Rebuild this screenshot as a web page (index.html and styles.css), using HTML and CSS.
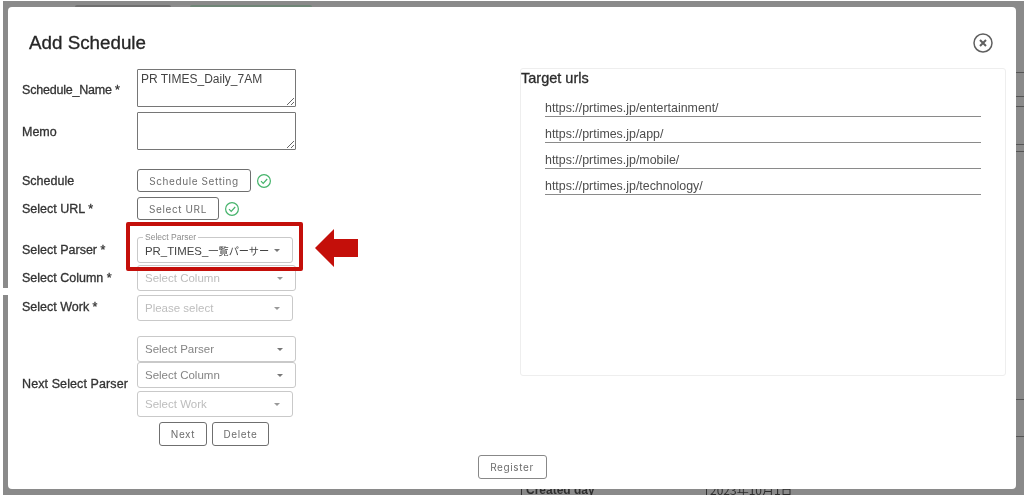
FILE: index.html
```html
<!DOCTYPE html>
<html lang="en">
<head>
<meta charset="utf-8">
<title>Add Schedule</title>
<link rel="stylesheet" href="styles.css">
</head>
<body>
<div class="page">
  <div class="backdrop">
    <div class="bg-bit bg-btn-a"></div>
    <div class="bg-bit bg-btn-b"></div>
    <div class="bg-bit bg-line l1"></div>
    <div class="bg-bit bg-line l2"></div>
    <div class="bg-bit bg-line l3"></div>
    <div class="bg-bit bg-line l4"></div>
    <div class="bg-bit bg-line l5"></div>
    <div class="bg-bit bg-line l6"></div>
    <div class="bg-bit bg-line l7"></div>
    <div class="bg-bit bg-bar b1"></div>
    <div class="bg-bit bg-bar b2"></div>
    <div class="bg-bit bg-created">Created day</div>
    <div class="bg-bit bg-date">2023年10月1日</div>
  </div>
  <div class="notch"></div>

  <main class="modal">
    <header class="modal-head">
      <h1 class="modal-title">Add Schedule</h1>
      <svg class="close-icon" width="22" height="22" viewBox="0 0 22 22" aria-label="close">
        <circle cx="11" cy="11" r="9" fill="none" stroke="#5f5f5f" stroke-width="1.5"/>
        <path d="M8 8l6 6M14 8l-6 6" fill="none" stroke="#5f5f5f" stroke-width="2"/>
      </svg>
    </header>
    <div class="modal-body">
      <form class="form">
        <div class="row">
          <label class="label label-name">Schedule_Name *</label>
          <textarea class="area">PR TIMES_Daily_7AM</textarea>
        </div>
        <div class="row gap-5">
          <label class="label label-memo">Memo</label>
          <textarea class="area"></textarea>
        </div>
        <div class="row gap-19">
          <label class="label">Schedule</label>
          <span class="btn btn-schedule">Schedule Setting</span>
          <svg class="check" width="16" height="16" viewBox="0 0 16 16">
            <circle cx="8" cy="8" r="6.4" fill="none" stroke="#45b36b" stroke-width="1.2"/>
            <path d="M5 8.2l2.2 2.2L11.2 6" fill="none" stroke="#45b36b" stroke-width="1.2"/>
          </svg>
        </div>
        <div class="row gap-5">
          <label class="label">Select URL *</label>
          <span class="btn btn-url">Select URL</span>
          <svg class="check" width="16" height="16" viewBox="0 0 16 16">
            <circle cx="8" cy="8" r="6.4" fill="none" stroke="#45b36b" stroke-width="1.2"/>
            <path d="M5 8.2l2.2 2.2L11.2 6" fill="none" stroke="#45b36b" stroke-width="1.2"/>
          </svg>
        </div>
        <div class="row gap-17 parser-row">
          <label class="label">Select Parser *</label>
          <div class="select narrow filled">
            <span class="float-label">Select Parser</span>
            <span class="value">PR_TIMES_<span class="cjk">一覧パーサー</span></span>
            <i class="caret"></i>
          </div>
          <div class="red-box"></div>
          <svg class="red-arrow" width="44" height="40" viewBox="0 0 44 40">
            <path d="M0 20L19 1v10h24v18H19v10z" fill="#c40f0a"/>
          </svg>
        </div>
        <div class="row gap-2">
          <label class="label">Select Column *</label>
          <div class="select faint"><span>Select Column</span><i class="caret"></i></div>
        </div>
        <div class="row gap-4">
          <label class="label label-work">Select Work *</label>
          <div class="select narrow faint"><span>Please select</span><i class="caret"></i></div>
        </div>
        <div class="row gap-15 next-row">
          <label class="label next-label">Next Select Parser</label>
          <div class="next-group">
            <div class="select muted"><span>Select Parser</span><i class="caret"></i></div>
            <div class="select muted"><span>Select Column</span><i class="caret"></i></div>
            <div class="select narrow faint gap-3"><span>Select Work</span><i class="caret"></i></div>
            <div class="next-actions">
              <span class="btn btn-next">Next</span>
              <span class="btn btn-delete">Delete</span>
            </div>
          </div>
        </div>
      </form>
      <section class="targets">
        <h2 class="targets-title">Target urls</h2>
        <ul class="url-list">
          <li class="url">https://prtimes.jp/entertainment/</li>
          <li class="url">https://prtimes.jp/app/</li>
          <li class="url">https://prtimes.jp/mobile/</li>
          <li class="url">https://prtimes.jp/technology/</li>
        </ul>
      </section>
    </div>
    <footer class="modal-foot">
      <span class="btn btn-register">Register</span>
    </footer>
  </main>
</div>
</body>
</html>
```
FILE: styles.css
```css
* { box-sizing: border-box; }
html, body { margin: 0; padding: 0; background: #fff; }
body {
  width: 1024px;
  height: 497px;
  overflow: hidden;
  font-family: "Liberation Sans", "Noto Sans CJK JP", sans-serif;
  color: #333;
}
.page {
  position: relative;
  width: 1024px;
  height: 497px;
  overflow: hidden;
  background: #fff;
  filter: blur(0.35px);
}
.backdrop {
  position: absolute;
  left: 3px;
  top: 1px;
  right: 0;
  bottom: 2px;
  overflow: hidden;
  background: #8a8a8a;
}
.notch { position: absolute; left: 0; top: 288px; width: 8px; height: 7px; background: #fff; }
.bg-bit { position: absolute; }
.bg-btn-a { left: 72px; top: 4px; width: 96px; height: 4px; background: #6f6f6f; border-radius: 2px 2px 0 0; }
.bg-btn-b { left: 187px; top: 4px; width: 122px; height: 4px; background: #6f8576; border-radius: 2px 2px 0 0; }
.bg-line { left: 1013px; width: 8px; height: 1px; background: #555; }
.l1 { top: 71px; } .l2 { top: 95px; } .l3 { top: 105px; } .l4 { top: 143px; } .l5 { top: 150px; } .l6 { top: 398px; } .l7 { top: 435px; }
.bg-bar { top: 488px; width: 1px; height: 8px; background: #333; }
.b1 { left: 518px; }
.b2 { left: 703px; }
.bg-created { left: 523px; top: 482px; font-size: 12px; font-weight: 700; color: #2d2d2d; white-space: nowrap; }
.bg-date { left: 707px; top: 480px; font-size: 12px; color: #2d2d2d; white-space: nowrap; font-family: "Noto Sans CJK JP", sans-serif; }

.modal {
  position: absolute;
  left: 8px;
  top: 7px;
  width: 1008px;
  height: 482px;
  background: #fff;
  border-radius: 4px;
  display: flex;
  flex-direction: column;
}
.modal-head {
  height: 62px;
  padding: 22px 22px 0 21px;
  display: flex;
  justify-content: space-between;
  align-items: flex-start;
  flex: none;
}
.modal-title {
  margin: 0;
  font-size: 18.8px;
  line-height: 28px;
  font-weight: 400;
  color: #262626;
  -webkit-text-stroke: 0.3px #262626;
}
.close-icon { margin: 3px 0 0 0; }
.modal-body {
  display: flex;
  justify-content: space-between;
  flex: none;
  height: 386px;
  padding: 0 10px 0 14px;
}
.form { width: 300px; flex: none; }
.row { display: flex; align-items: center; position: relative; }
.gap-2 { margin-top: 2px; }
.gap-3 { margin-top: 3px; }
.gap-4 { margin-top: 4px; }
.gap-5 { margin-top: 5px; }
.gap-15 { margin-top: 15px; }
.gap-17 { margin-top: 17px; }
.gap-19 { margin-top: 19px; }
.label {
  width: 115px;
  flex: none;
  font-size: 12.5px;
  color: #333;
  -webkit-text-stroke: 0.3px #333;
  white-space: nowrap;
}
.label-name { padding-top: 4px; letter-spacing: -0.2px; }
.label-memo { padding-top: 2px; }
.label-work { padding-bottom: 2px; }
.next-row { align-items: flex-start; }
.next-label { margin-top: 41px; letter-spacing: 0.1px; }
.area {
  width: 159px;
  height: 38px;
  display: block;
  padding: 2px 3px;
  margin: 0;
  font: 12px/14px "Liberation Sans", sans-serif;
  color: #444;
  background: #fff;
  border: 1px solid #767676;
  border-radius: 1px;
  outline: none;
}
.btn {
  display: flex;
  align-items: center;
  justify-content: center;
  flex: none;
  height: 24px;
  font-family: Inter, "Liberation Sans", sans-serif;
  font-size: 10px;
  letter-spacing: 0.6px;
  color: #6d6d6d;
  background: #fff;
  border: 1px solid #6f6f6f;
  border-radius: 3px;
}
.btn-schedule { width: 114px; height: 23px; }
.btn-url { width: 82px; height: 23px; }
.btn-next { width: 48px; }
.btn-delete { width: 57px; margin-left: 5px; }
.btn-register { width: 69px; border-color: #888; }
.check { margin-left: 5px; flex: none; }
.select {
  position: relative;
  width: 159px;
  height: 26px;
  padding: 0 7px;
  display: flex;
  align-items: center;
  justify-content: space-between;
  font-size: 11.5px;
  white-space: nowrap;
  background: #fff;
  border: 1px solid #c9c9c9;
  border-radius: 3px;
  flex: none;
}
.narrow { width: 156px; }
.filled { color: #444; padding-right: 12px; font-size: 11.4px; }
.cjk { font-size: 10.2px; font-family: "Noto Sans CJK JP", sans-serif; }
.faint { color: #bdbdbd; }
.muted { color: #858585; }
.caret {
  width: 0;
  height: 0;
  margin-right: 5px;
  border-left: 3px solid transparent;
  border-right: 3px solid transparent;
  border-top: 3px solid #777;
}
.faint .caret { border-top-color: #999; }
.filled .caret { margin-right: 0; }
.float-label {
  position: absolute;
  left: 5px;
  top: -5px;
  padding: 0 2px;
  font-size: 8.5px;
  line-height: 9px;
  color: #8c8c8c;
  background: #fff;
}
.red-box {
  position: absolute;
  left: 104px;
  top: -15px;
  width: 177px;
  height: 49px;
  border: 4px solid #c40f0a;
  border-radius: 2px;
  z-index: 2;
}
.red-arrow {
  position: absolute;
  left: 293px;
  top: -9px;
}
.parser-row { z-index: 2; }
.next-group { display: flex; flex-direction: column; }
.next-actions {
  display: flex;
  margin-top: 5px;
  padding-left: 22px;
}
.targets {
  width: 486px;
  height: 308px;
  margin-top: -1px;
  border: 1px solid #eeeeee;
  border-radius: 3px;
  flex: none;
}
.targets-title {
  margin: 0;
  padding-top: 1px;
  font-size: 14.5px;
  line-height: 17px;
  font-weight: 400;
  color: #2b2b2b;
  -webkit-text-stroke: 0.3px #2b2b2b;
}
.url-list {
  list-style: none;
  margin: 0;
  padding: 4px 24px 0 24px;
}
.url {
  height: 26px;
  padding-top: 9px;
  font-size: 12.4px;
  line-height: 16px;
  color: #4d4d4d;
  border-bottom: 1px solid #8a8a8a;
}
.modal-foot {
  display: flex;
  justify-content: center;
}
```
